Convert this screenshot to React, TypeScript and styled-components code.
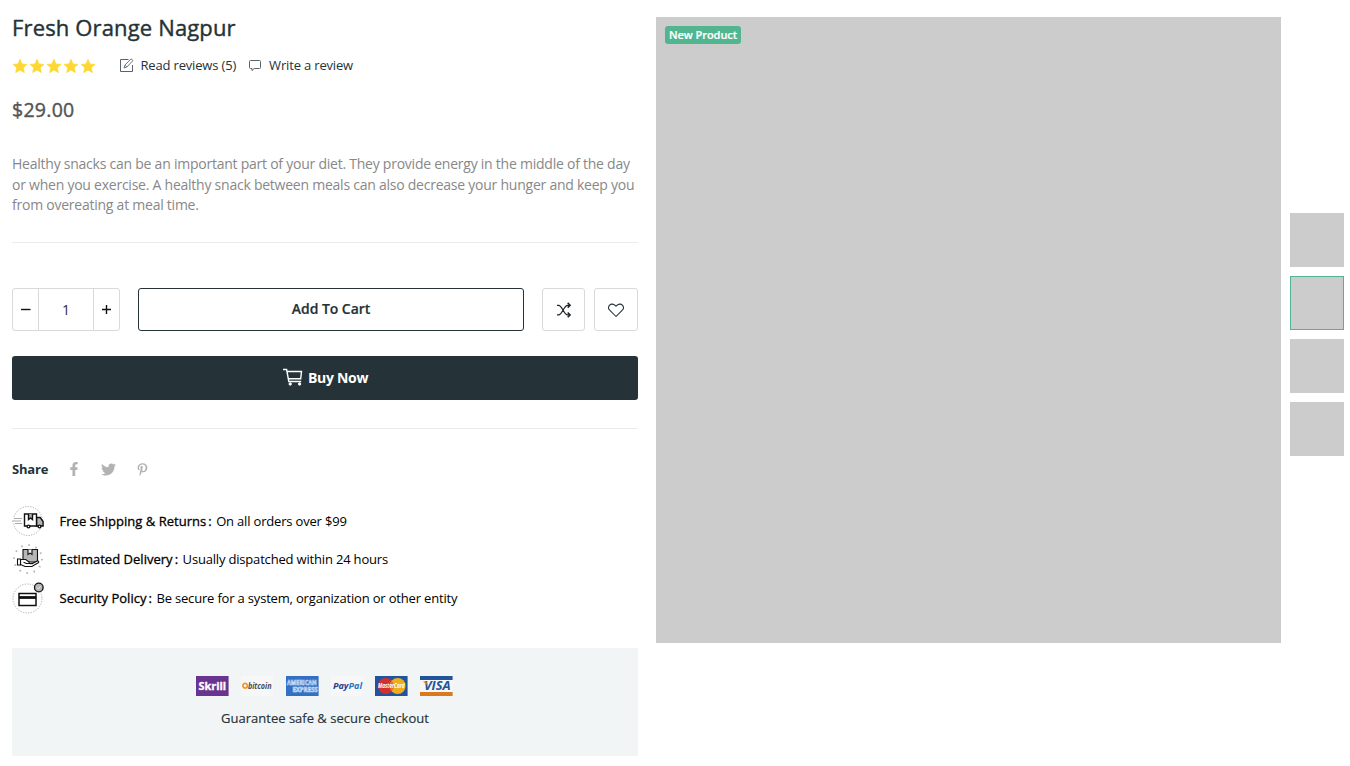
import React from 'react';
import styled, { createGlobalStyle } from 'styled-components';
import { FaFacebookF, FaTwitter, FaPinterestP } from 'react-icons/fa';

const GlobalStyle = createGlobalStyle`
  *, *::before, *::after { box-sizing: border-box; }
  body {
    margin: 0;
    background: #fff;
    color: #253237;
    font-family: 'Open Sans', sans-serif;
    font-size: 13px;
  }
  button { font-family: inherit; padding: 0; background: #fff; }
  h1, p { margin: 0; }
  svg { display: block; flex: none; }
`;

const Page = styled.main`
  display: flex;
  width: 1350px;
  height: 766px;
  padding-left: 12px;
  overflow: hidden;
`;

const Details = styled.section`
  display: flex;
  flex-direction: column;
  width: 626px;
  padding-top: 11px;
`;

const Title = styled.h1`
  height: 32px;
  line-height: 32px;
  font-size: 22px;
  font-weight: 400;
  letter-spacing: 0.15px;
  -webkit-text-stroke: 0.4px currentColor;
`;

const Reviews = styled.div`
  display: flex;
  align-items: center;
  height: 20px;
  margin-top: 12px;
`;

const Stars = styled.div`
  display: flex;
  gap: 1px;
  margin: 1px 24px 0 0;
`;

const ReviewLink = styled.a<{ $gap: number }>`
  display: flex;
  align-items: center;
  gap: ${(p) => p.$gap}px;
  margin-right: 13px;
  letter-spacing: -0.17px;
`;

const Price = styled.p`
  margin-top: 21px;
  height: 28px;
  line-height: 28px;
  font-size: 19.5px;
  letter-spacing: 0.28px;
  color: #555;
  -webkit-text-stroke: 0.4px currentColor;
`;

const Description = styled.p`
  margin-top: 30px;
  height: 62px;
  line-height: 20.5px;
  font-size: 14px;
  letter-spacing: -0.24px;
  color: #888;
  white-space: nowrap;
`;

const Rule = styled.div<{ $top: number }>`
  height: 1px;
  margin-top: ${(p) => p.$top}px;
  background: #ebebeb;
`;

const Actions = styled.div`
  display: flex;
  height: 43px;
  margin-top: 45px;
`;

const Stepper = styled.div`
  display: grid;
  grid-template-columns: 25px 1fr 25px;
  width: 108px;
  margin-right: 18px;
  border: 1px solid #d9d9d9;
  border-radius: 3px;
`;

const StepCell = styled.div<{ $bordered?: boolean }>`
  display: flex;
  align-items: center;
  justify-content: center;
  font-size: 14px;
  border: solid #d9d9d9;
  border-width: ${(p) => (p.$bordered ? '0 1px' : '0')};
`;

const CartButton = styled.button`
  width: 386px;
  padding-bottom: 2px;
  border: 1px solid #253237;
  border-radius: 3px;
  color: #253237;
  font-size: 14px;
  font-weight: 600;
  letter-spacing: -0.05px;
  -webkit-text-stroke: 0.2px currentColor;
`;

const IconButton = styled.button<{ $width: number; $left: number }>`
  display: flex;
  align-items: center;
  justify-content: center;
  width: ${(p) => p.$width}px;
  margin-left: ${(p) => p.$left}px;
  border: 1px solid #d9d9d9;
  border-radius: 3px;
  color: #253237;
`;

const BuyButton = styled.button`
  display: flex;
  align-items: center;
  justify-content: center;
  gap: 5px;
  height: 44px;
  margin-top: 25px;
  padding: 0 0 2px 1px;
  border: 0;
  border-radius: 3px;
  background: #253237;
  color: #fff;
  font-size: 14px;
  font-weight: 700;
  letter-spacing: -0.3px;
`;

const Share = styled.div`
  display: flex;
  align-items: center;
  height: 20px;
  margin-top: 30px;
  color: #b2b2b2;
`;

const ShareLabel = styled.span`
  width: 54px;
  color: #253237;
  font-weight: 700;
  letter-spacing: -0.2px;
`;

const ShareIcon = styled.span`
  display: flex;
  justify-content: center;
  width: 16px;
  margin-right: 18px;
`;

const Features = styled.ul`
  display: flex;
  flex-direction: column;
  list-style: none;
  margin: 22.5px 0 0;
  padding: 0;
`;

const Feature = styled.li`
  display: flex;
  align-items: center;
  gap: 15.5px;
  height: 38.5px;
  color: #000;
`;

const FeatureText = styled.span`
  letter-spacing: -0.18px;
  white-space: pre;
`;

const FeatureName = styled.span`
  margin-right: 4.5px;
  letter-spacing: 0.02px;
  -webkit-text-stroke: 0.3px currentColor;

  &::after {
    content: ':';
    margin-left: 2px;
  }
`;

const Payments = styled.div`
  display: flex;
  flex-direction: column;
  align-items: center;
  height: 108px;
  margin-top: 31px;
  padding-top: 28px;
  background: #f1f5f6;
`;

const Logos = styled.div`
  display: flex;
  gap: 12.2px;
  margin: 0 1px 12px 0;
`;

const Guarantee = styled.span`
  line-height: 20px;
  -webkit-text-stroke: 0.15px currentColor;
`;

const Gallery = styled.section`
  width: 625px;
  height: 626px;
  margin: 17px 9px 0 18px;
  padding: 9px;
  background: #ccc;
`;

const Badge = styled.span`
  display: block;
  width: 76px;
  height: 18px;
  line-height: 18px;
  border-radius: 3px;
  background: #51b690;
  color: #fff;
  text-align: center;
  font-size: 11px;
  font-weight: 600;
  letter-spacing: -0.04px;
  -webkit-text-stroke: 0.2px currentColor;
`;

const Thumbs = styled.div`
  display: flex;
  flex-direction: column;
  gap: 9px;
  padding-top: 213px;
`;

const Thumb = styled.div<{ $active?: boolean }>`
  width: 54px;
  height: 54px;
  background: #ccc;
  border: ${(p) => (p.$active ? '1px solid #51b690' : '0')};
`;

const Star = () => (
  <svg width="16" height="16" viewBox="0 0 16 16">
    <path
      d="M8 1.4l2 4.6 4.9.4-3.7 3.3 1.1 4.8L8 12l-4.3 2.5 1.1-4.8L1.1 6.4 6 6z"
      fill="#fdd835"
      stroke="#fdd835"
      strokeWidth=".8"
      strokeLinejoin="round"
    />
  </svg>
);

const PencilIcon = () => (
  <svg width="14" height="14" viewBox="0 0 14 14" fill="none" stroke="#59636a">
    <path d="M8.5 1.5h-8v12h12V7" />
    <path d="M4 10l.8-2.8 6.3-6.4 1.9 1.8-6.3 6.5zM5 7.2l1.9 1.9" strokeWidth=".9" />
  </svg>
);

const CommentIcon = () => (
  <svg width="12" height="12" viewBox="0 0 12 12" fill="none" stroke="#59636a">
    <path d="M1.5 1.5h9a1 1 0 0 1 1 1v6a1 1 0 0 1-1 1H5.2L3 11.6V9.5H1.5a1 1 0 0 1-1-1v-6a1 1 0 0 1 1-1z" />
  </svg>
);

const Sign = ({ plus }: { plus?: boolean }) => (
  <svg width="11" height="11" viewBox="0 0 11 11" stroke="#111" strokeWidth="1.4">
    <path d={plus ? 'M1 5.5h9M5.5 1v9' : 'M1 5.5h9.5'} />
  </svg>
);

const ShuffleIcon = () => (
  <svg width="16" height="16" viewBox="0 0 16 16" fill="none" stroke="#1b2529" strokeWidth="1.2">
    <path d="M1 3.3h1.6c3.5 0 5.3 9.6 9 9.6H14M1 12.9h1.6c3.5 0 5.3-9.6 9-9.6H14" />
    <path d="M11.7.9l2.4 2.4-2.4 2.3M11.7 10.5l2.4 2.4-2.4 2.3" strokeWidth="1.5" />
  </svg>
);

const HeartIcon = () => (
  <svg width="16" height="16" viewBox="0 0 16 16" fill="none" stroke="#253237" strokeWidth="1.05">
    <path d="M8 14.5L1.7 8.2C.3 6.7.2 4.8 1.4 3.3 3 1.5 5.8 1.7 8 4.2c2.2-2.5 5-2.7 6.6-.9 1.2 1.5 1.1 3.4-.3 4.9z" />
  </svg>
);

const CartIcon = () => (
  <svg width="20" height="18" viewBox="0 0 20 18" fill="none" stroke="#fff" strokeWidth="1.4">
    <path d="M0 1.5h3.6l2.2 12h12.4M4 3.5h14.5l-.8 7.3H5.5" />
    <circle cx="7.2" cy="16" r="1.2" fill="#fff" strokeWidth=".9" />
    <circle cx="16.6" cy="16" r="1.2" fill="#fff" strokeWidth=".9" />
  </svg>
);

const TruckIcon = () => (
  <svg width="32" height="32" viewBox="0 0 32 32" fill="none" stroke="#111" strokeWidth="1.4">
    <circle cx="16" cy="16" r="14.5" stroke="#aaa" strokeWidth="1" strokeDasharray="1.2 1.4" />
    <path d="M0 13.5h11v5H1z" fill="#fff" stroke="none" />
    <path d="M2 13.5h8M0 16h9M3 18.5h7" stroke="#aaa" strokeWidth="1" />
    <path d="M24.5 12.5h3.7l2.9 4V21h-6.6z" fill="#b5b5b5" />
    <path d="M12.5 9h12v12h-12z" fill="#fff" />
    <path d="M16.5 9v5.5l2-1.5 2 1.5V9" fill="#aaa" />
    <circle cx="16.5" cy="21.5" r="1.4" fill="#fff" />
    <circle cx="27.5" cy="21.5" r="1.4" fill="#fff" />
  </svg>
);

const DeliveryIcon = () => (
  <svg width="32" height="32" viewBox="0 0 32 32" fill="none" stroke="#111" strokeWidth="1.1">
    <circle cx="16" cy="16" r="14" stroke="#b5b5b5" strokeWidth="2" strokeDasharray="1.5 5.83" />
    <path d="M11 6.5h14.5v12.5H11z" fill="#b5b5b5" />
    <path d="M16 6.5v5l2-1.4 2 1.4v-5" fill="#eee" />
    <path d="M8.5 16.5h5.2l3 2.3c1 .8.5 1.8-.5 1.7l4 .1 5-2.5c1.4-.5 2 .9 1 1.7l-6.3 3.7H13l-4.5-2z" fill="#fff" />
    <path d="M5.5 16h3v6h-3zM11.5 19.2l3 1.3h2" fill="#fff" />
  </svg>
);

const CardIcon = () => (
  <svg width="32" height="32" viewBox="0 0 32 32" fill="none" stroke="#111" strokeWidth="1.5">
    <circle cx="15.5" cy="16.5" r="14.5" stroke="#aaa" strokeWidth="1" strokeDasharray="1.2 1.4" />
    <path d="M7 11.5h17v12H7z" fill="#fff" />
    <path d="M7 15.5h17" strokeWidth="2.8" />
    <circle cx="26.8" cy="5.5" r="4.3" fill="#b5b5b5" strokeWidth="1.3" />
    <path d="M24.8 5.5l1.4 1.4 2.5-2.8" stroke="#eee" strokeWidth=".9" />
  </svg>
);

const LogoText = styled.text<{ $weight?: number }>`
  font-family: 'Open Sans', sans-serif;
  font-weight: ${(p) => p.$weight ?? 700};
`;

const LogoSvg = ({ bg, children }: { bg: string; children: React.ReactNode }) => (
  <svg width="32.6" height="20" viewBox="0 0 33 20" preserveAspectRatio="none" overflow="visible">
    <rect width="33" height="20" fill={bg} />
    {children}
  </svg>
);

const PaymentLogos = () => (
  <Logos>
    <LogoSvg bg="#68348f">
      <LogoText $weight={700} x="2.5" y="14" fontSize="11" textLength="28" lengthAdjust="spacingAndGlyphs" fill="#fff" stroke="#fff" strokeWidth=".3">Skrill</LogoText>
    </LogoSvg>
    <LogoSvg bg="#f7f7f7">
      <circle cx="4.2" cy="9.7" r="2.3" fill="none" stroke="#f39325" strokeWidth="1.7" />
      <LogoText x="7" y="12.6" fontSize="8" textLength="24" lengthAdjust="spacingAndGlyphs" fill="#4d4d4d" fontStyle="italic">bitcoin</LogoText>
    </LogoSvg>
    <LogoSvg bg="#3370c4">
      <LogoText x="1" y="9.3" fontSize="6.6" textLength="30" lengthAdjust="spacingAndGlyphs" fill="none" stroke="#cfe2fa" strokeWidth=".65">AMERICAN</LogoText>
      <LogoText x="6.5" y="16" fontSize="6.6" textLength="25.5" lengthAdjust="spacingAndGlyphs" fill="none" stroke="#cfe2fa" strokeWidth=".65">EXPRESS</LogoText>
    </LogoSvg>
    <LogoSvg bg="#f7f7f7">
      <LogoText x="2" y="12.9" fontSize="9" textLength="29.5" lengthAdjust="spacingAndGlyphs" fill="#24408e" fontStyle="italic">
        Pay<tspan fill="#2378be">Pal</tspan>
      </LogoText>
    </LogoSvg>
    <LogoSvg bg="#22549b">
      <circle cx="11" cy="10" r="8" fill="#d22f30" />
      <circle cx="23" cy="10" r="8" fill="#edae1c" />
      <path d="M17 4.7a8 8 0 0 1 0 10.6 8 8 0 0 1 0-10.6z" fill="#e27027" />
      <LogoText x="3" y="12.2" fontSize="6.6" textLength="27" lengthAdjust="spacingAndGlyphs" fill="#fff" fontStyle="italic">MasterCard</LogoText>
    </LogoSvg>
    <LogoSvg bg="#f7f7f7">
      <rect width="33" height="4" fill="#22549b" />
      <rect y="16" width="33" height="4" fill="#d97a1c" />
      <LogoText x="4" y="14" fontSize="11.5" textLength="27" lengthAdjust="spacingAndGlyphs" fill="#22549b" fontStyle="italic">VISA</LogoText>
      <path d="M3 5.5h3.5l1.5 4z" fill="#d97a1c" />
    </LogoSvg>
  </Logos>
);

const features = [
  { icon: <TruckIcon />, name: 'Free Shipping & Returns', text: 'On all orders over $99' },
  { icon: <DeliveryIcon />, name: 'Estimated Delivery', text: 'Usually dispatched within 24 hours' },
  { icon: <CardIcon />, name: 'Security Policy', text: 'Be secure for a system, organization or other entity' },
];

export default function App() {
  return (
    <>
      <GlobalStyle />
      <Page>
        <Details>
          <Title>Fresh Orange Nagpur</Title>
          <Reviews>
            <Stars>
              {[0, 1, 2, 3, 4].map((i) => (
                <Star key={i} />
              ))}
            </Stars>
            <ReviewLink $gap={6.5}>
              <PencilIcon />
              Read reviews (5)
            </ReviewLink>
            <ReviewLink $gap={8}>
              <CommentIcon />
              Write a review
            </ReviewLink>
          </Reviews>
          <Price>$29.00</Price>
          <Description>
            Healthy snacks can be an important part of your diet. They provide energy in the middle of the day
            <br />
            or when you exercise. A healthy snack between meals can also decrease your hunger and keep you
            <br />
            from overeating at meal time.
          </Description>
          <Rule $top={26} />
          <Actions>
            <Stepper>
              <StepCell><Sign /></StepCell>
              <StepCell $bordered>1</StepCell>
              <StepCell><Sign plus /></StepCell>
            </Stepper>
            <CartButton>Add To Cart</CartButton>
            <IconButton $width={43} $left={18}><ShuffleIcon /></IconButton>
            <IconButton $width={44} $left={9}><HeartIcon /></IconButton>
          </Actions>
          <BuyButton>
            <CartIcon />
            Buy Now
          </BuyButton>
          <Rule $top={28} />
          <Share>
            <ShareLabel>Share</ShareLabel>
            <ShareIcon><FaFacebookF size={14} /></ShareIcon>
            <ShareIcon><FaTwitter size={15} /></ShareIcon>
            <ShareIcon><FaPinterestP size={13} /></ShareIcon>
          </Share>
          <Features>
            {features.map((f) => (
              <Feature key={f.name}>
                {f.icon}
                <FeatureText>
                  <FeatureName>{f.name}</FeatureName>
                  {f.text}
                </FeatureText>
              </Feature>
            ))}
          </Features>
          <Payments>
            <PaymentLogos />
            <Guarantee>Guarantee safe &amp; secure checkout</Guarantee>
          </Payments>
        </Details>
        <Gallery>
          <Badge>New Product</Badge>
        </Gallery>
        <Thumbs>
          <Thumb />
          <Thumb $active />
          <Thumb />
          <Thumb />
        </Thumbs>
      </Page>
    </>
  );
}
